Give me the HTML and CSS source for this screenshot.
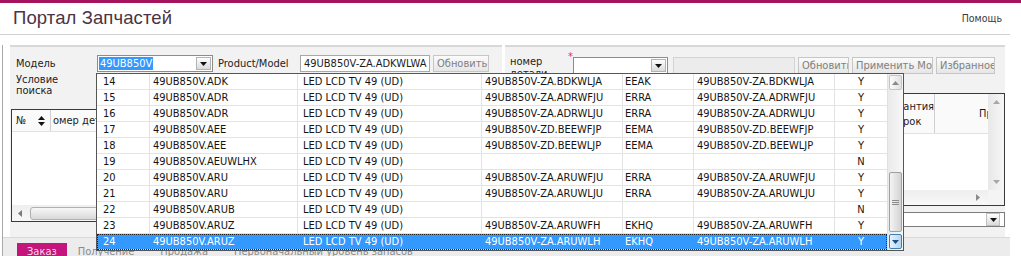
FILE: index.html
```
<!DOCTYPE html>
<html lang="ru">
<head>
<meta charset="utf-8">
<title>Портал Запчастей</title>
<link rel="stylesheet" href="styles.css">
</head>
<body>
<div class="topbar"></div>
<div class="page">
  <header class="header">
    <h1 class="title">Портал Запчастей</h1>
    <a class="help" href="#">Помощь</a>
  </header>

  <div class="main">
    <div class="work">
      <div class="col col-left">
        <div class="search search-left">
          <div class="row">
            <span class="lbl lbl-model">Модель</span>
            <div class="select sel-model">
              <span class="sel-val">49UB850V</span>
              <span class="dd-btn"><svg width="7" height="4" viewBox="0 0 7 4"><path d="M0 0H7L3.5 4Z" fill="#111"/></svg></span>
            </div>
            <span class="lbl lbl-pm">Product/Model</span>
            <div class="input pm-input">49UB850V-ZA.ADKWLWA</div>
            <button class="btn btn-upd">Обновить</button>
          </div>
          <div class="lbl row-cond">Условие<br>поиска</div>
        </div>

        <div class="grid grid-left">
          <div class="ghead">
            <div class="gh gh-no">№<svg class="sort" width="7" height="10" viewBox="0 0 7 10"><path d="M0 4L3.5 0L7 4Z M0 6H7L3.5 10Z" fill="#111"/></svg></div>
            <div class="gh gh-part">омер детали</div>
          </div>
          <div class="gbody"></div>
          <div class="hscroll">
            <span class="sb-btn"><svg width="4" height="7" viewBox="0 0 4 7"><path d="M4 0V7L0 3.5Z" fill="#7a7a7a"/></svg></span>
            <span class="hthumb"></span>
          </div>
        </div>
      </div>

      <div class="col col-right">
        <div class="search search-right">
          <span class="lbl lbl-part">номер<br>детали</span>
          <span class="req">*</span>
          <div class="select sel-part">
            <span class="dd-btn"><svg width="7" height="4" viewBox="0 0 7 4"><path d="M0 0H7L3.5 4Z" fill="#111"/></svg></span>
          </div>
          <div class="input input-dis"></div>
          <button class="btn b1">Обновить</button>
          <button class="btn b2">Применить Модель</button>
          <button class="btn b3">Избранное</button>
        </div>

        <div class="grid grid-right">
          <div class="ghead ghead-r">
            <div class="gh gh-fill"></div>
            <div class="gh gh-war">Гарантия<br>срок</div>
            <div class="gh gh-note">Примечание</div>
          </div>
          <div class="gbody gbody-r"></div>
          <div class="vscroll">
            <svg width="7" height="4" viewBox="0 0 7 4"><path d="M0 4L3.5 0L7 4Z" fill="#a8a8a8"/></svg>
            <svg width="7" height="4" viewBox="0 0 7 4"><path d="M0 0H7L3.5 4Z" fill="#a8a8a8"/></svg>
          </div>
          <div class="hscroll hscroll-r">
            <svg width="4" height="7" viewBox="0 0 4 7"><path d="M0 0V7L4 3.5Z" fill="#8a8a8a"/></svg>
          </div>
          <div class="corner"></div>
        </div>

        <div class="select sel-page">
          <span class="dd-btn"><svg width="7" height="4" viewBox="0 0 7 4"><path d="M0 0H7L3.5 4Z" fill="#111"/></svg></span>
        </div>
      </div>
    </div>

    <nav class="tabs">
      <span class="tab tab-active">Заказ</span>
      <span class="tab">Получение</span>
      <span class="tab">Продажа</span>
      <span class="tab">Первоначальный уровень запасов</span>
    </nav>
  </div>

  <div class="dropdown">
    <div class="dd-list">
      <div class="dd-row"><span class="c1">14</span><span class="c2">49UB850V.ADK</span><span class="c3">LED LCD TV 49 (UD)</span><span class="c4">49UB850V-ZA.BDKWLJA</span><span class="c5">EEAK</span><span class="c6">49UB850V-ZA.BDKWLJA</span><span class="c7">Y</span></div>
      <div class="dd-row"><span class="c1">15</span><span class="c2">49UB850V.ADR</span><span class="c3">LED LCD TV 49 (UD)</span><span class="c4">49UB850V-ZA.ADRWFJU</span><span class="c5">ERRA</span><span class="c6">49UB850V-ZA.ADRWFJU</span><span class="c7">Y</span></div>
      <div class="dd-row"><span class="c1">16</span><span class="c2">49UB850V.ADR</span><span class="c3">LED LCD TV 49 (UD)</span><span class="c4">49UB850V-ZA.ADRWLJU</span><span class="c5">ERRA</span><span class="c6">49UB850V-ZA.ADRWLJU</span><span class="c7">Y</span></div>
      <div class="dd-row"><span class="c1">17</span><span class="c2">49UB850V.AEE</span><span class="c3">LED LCD TV 49 (UD)</span><span class="c4">49UB850V-ZD.BEEWFJP</span><span class="c5">EEMA</span><span class="c6">49UB850V-ZD.BEEWFJP</span><span class="c7">Y</span></div>
      <div class="dd-row"><span class="c1">18</span><span class="c2">49UB850V.AEE</span><span class="c3">LED LCD TV 49 (UD)</span><span class="c4">49UB850V-ZD.BEEWLJP</span><span class="c5">EEMA</span><span class="c6">49UB850V-ZD.BEEWLJP</span><span class="c7">Y</span></div>
      <div class="dd-row"><span class="c1">19</span><span class="c2">49UB850V.AEUWLHX</span><span class="c3">LED LCD TV 49 (UD)</span><span class="c4"></span><span class="c5"></span><span class="c6"></span><span class="c7">N</span></div>
      <div class="dd-row"><span class="c1">20</span><span class="c2">49UB850V.ARU</span><span class="c3">LED LCD TV 49 (UD)</span><span class="c4">49UB850V-ZA.ARUWFJU</span><span class="c5">ERRA</span><span class="c6">49UB850V-ZA.ARUWFJU</span><span class="c7">Y</span></div>
      <div class="dd-row"><span class="c1">21</span><span class="c2">49UB850V.ARU</span><span class="c3">LED LCD TV 49 (UD)</span><span class="c4">49UB850V-ZA.ARUWLJU</span><span class="c5">ERRA</span><span class="c6">49UB850V-ZA.ARUWLJU</span><span class="c7">Y</span></div>
      <div class="dd-row"><span class="c1">22</span><span class="c2">49UB850V.ARUB</span><span class="c3">LED LCD TV 49 (UD)</span><span class="c4"></span><span class="c5"></span><span class="c6"></span><span class="c7">N</span></div>
      <div class="dd-row"><span class="c1">23</span><span class="c2">49UB850V.ARUZ</span><span class="c3">LED LCD TV 49 (UD)</span><span class="c4">49UB850V-ZA.ARUWFH</span><span class="c5">EKHQ</span><span class="c6">49UB850V-ZA.ARUWFH</span><span class="c7">Y</span></div>
      <div class="dd-row sel"><span class="c1">24</span><span class="c2">49UB850V.ARUZ</span><span class="c3">LED LCD TV 49 (UD)</span><span class="c4">49UB850V-ZA.ARUWLH</span><span class="c5">EKHQ</span><span class="c6">49UB850V-ZA.ARUWLH</span><span class="c7">Y</span></div>
    </div>
    <div class="dd-scroll">
      <span class="ds-btn ds-up"><svg width="7" height="4" viewBox="0 0 7 4"><path d="M0 4L3.5 0L7 4Z" fill="#8a8a8a"/></svg></span>
      <div class="ds-track">
        <span class="ds-thumb"><i></i><i></i><i></i></span>
      </div>
      <span class="ds-btn ds-down"><svg width="7" height="4" viewBox="0 0 7 4"><path d="M0 0H7L3.5 4Z" fill="#21507e"/></svg></span>
    </div>
  </div>
</div>
</body>
</html>
```
FILE: styles.css
```
* { box-sizing: border-box; }
html, body { overflow: hidden; }
body {
  margin: 0;
  background: #fff;
  font-family: "DejaVu Sans Condensed", "DejaVu Sans", sans-serif;
  font-stretch: condensed;
  font-size: 11px;
  color: #1c1c1c;
}
.topbar { height: 3px; background: #a5135d; }
.page { position: relative; width: 1010px; }

.header {
  height: 32px;
  border-bottom: 1px solid #d2d2d2;
  display: flex;
  justify-content: space-between;
  align-items: center;
  padding: 0 8px 0 13px;
}
.title {
  margin: 0;
  font: normal 18.5px/1 "Liberation Sans", Arial, sans-serif;
  color: #4b3443;
  letter-spacing: 0.1px;
}
.help {
  align-self: flex-start;
  margin-top: 9px;
  color: #3a3a3a;
  text-decoration: none;
  font-size: 10.5px;
}

.main { margin: 10px 0 0 2px; border-left: 1px solid #a8a8a8; }
.work { display: flex; gap: 3px; padding-left: 7px; }
.col { background: #f2f2f2; display: flex; flex-direction: column; height: 192px; }
.col-left { width: 492px; }
.col-right { width: 500px; }

.search { border-top: 2px solid #d8d8d8; }
.search-left { height: 64px; padding: 8px 0 0 6px; }
.row { display: flex; align-items: center; height: 17px; }
.lbl { color: #222; white-space: nowrap; }
.lbl-model { width: 81px; }
.lbl-pm { width: 82px; margin-left: 5px; }
.row-cond { margin-top: 2px; line-height: 11px; }

.select {
  display: flex;
  align-items: stretch;
  height: 17px;
  padding: 1px;
  background: #fff;
  border: 1px solid #8c8c8c;
}
.sel-model { width: 116px; }
.sel-val { background: #3399ff; color: #fff; padding: 0 1px; line-height: 13px; }
.dd-btn {
  width: 15px;
  margin-left: auto;
  border: 1px solid #b3b3b3;
  background: linear-gradient(#fefefe, #dadada);
  display: flex;
  align-items: center;
  justify-content: center;
}
.input {
  height: 17px;
  padding: 0 3px;
  line-height: 15px;
  background: #fff;
  border: 1px solid #a8a8a8;
  white-space: nowrap;
  overflow: hidden;
}
.pm-input { width: 130px; }
.btn {
  height: 17px;
  padding: 0 3px;
  font: inherit;
  line-height: 15px;
  color: #808080;
  background: linear-gradient(#fbfbfb, #e6e6e6);
  border: 1px solid #c6c6c6;
  white-space: nowrap;
  overflow: hidden;
  text-align: left;
}
.btn-upd { width: 56px; margin-left: 3px; text-align: center; }

.search-right {
  height: 48px;
  display: flex;
  align-items: flex-start;
  padding: 10px 0 0 5px;
}
.lbl-part { width: 58px; line-height: 12px; margin-top: -1px; }
.req { width: 5px; color: #d3366e; line-height: 12px; margin-top: -6px; }
.sel-part { width: 95px; }
.input-dis { width: 122px; margin-left: 5px; background: #ececec; border-color: #d3d3d3; }
.b1 { width: 51px; margin-left: 3px; }
.b2 { width: 81px; margin-left: 3px; }
.b3 { width: 59px; margin-left: 3px; }

.grid { background: #fff; border: 1px solid #3a3a3a; height: 113px; }
.grid-left { width: 489px; margin-left: 1px; display: flex; flex-direction: column; }
.ghead { height: 22px; display: flex; background: #fafafa; border-bottom: 1px solid #e2e2e2; overflow: hidden; }
.gh { display: flex; align-items: center; white-space: nowrap; overflow: hidden; flex: none; }
.gh-no { width: 39px; padding-left: 4px; border-right: 1px solid #cfcfcf; }
.sort { margin-left: auto; margin-right: 5px; }
.gh-part { padding-left: 2px; flex: 1; }
.gbody { flex: 1; }
.hscroll {
  height: 16px;
  display: flex;
  align-items: center;
  background: linear-gradient(#eeeeee, #f8f8f8);
}
.sb-btn { width: 16px; display: flex; justify-content: center; }
.hthumb {
  flex: 1;
  height: 13px;
  margin-left: 2px;
  border: 1px solid #b0b0b0;
  border-radius: 3px;
  background: linear-gradient(#f7f7f7, #d9d9d9);
}

.grid-right {
  display: grid;
  grid-template-columns: minmax(0, 1fr) 16px;
  grid-template-rows: 40px minmax(0, 1fr) 15px;
}
.ghead-r { height: 40px; grid-column: 1; grid-row: 1; }
.gh-fill { width: 379px; }
.gh-war { width: 50px; justify-content: center; text-align: center; line-height: 15px; border-right: 1px solid #cfcfcf; }
.gh-note { flex: 1; padding-left: 44px; }
.gbody-r { grid-column: 1; grid-row: 2; }
.vscroll {
  grid-column: 2;
  grid-row: 1 / 3;
  display: flex;
  flex-direction: column;
  justify-content: space-between;
  align-items: center;
  padding: 6px 0 6px;
  background: linear-gradient(90deg, #e8e8e8, #f6f6f6);
}
.hscroll-r { grid-column: 1; grid-row: 3; justify-content: flex-end; padding-right: 8px; height: 15px; }
.corner { grid-column: 2; grid-row: 3; background: #f4f4f4; }

.sel-page { width: 200px; height: 15px; margin: 6px 0 0 auto; padding: 0 4px 0 1px; border-color: #7c7c7c; }
.sel-page .dd-btn { width: 14px; border-color: #c0c0c0; }

.tabs {
  height: 21px;
  display: flex;
  align-items: flex-start;
  padding: 5px 0 0 14px;
  background: #ececec;
  border-top: 1px solid #d9d9d9;
}
.tab { height: 17px; line-height: 17px; padding: 0 13px; color: #8a8a8a; white-space: nowrap; }
.tab-active { padding: 0 10px; margin-right: -2px; background: #c3157b; color: #fbd6ea; }

.dropdown {
  position: absolute;
  left: 96px;
  top: 70px;
  width: 808px;
  height: 178px;
  display: flex;
  background: #fff;
  border: 1px solid #555;
}
.dd-list { width: 790px; }
.dd-row { display: flex; height: 16px; border-bottom: 1px solid #e3e3e3; color: #141414; }
.dd-row span {
  flex: none;
  padding-left: 4px;
  line-height: 15px;
  white-space: nowrap;
  overflow: hidden;
  border-right: 1px solid #e3e3e3;
}
.dd-row .c1 { width: 53px; padding-left: 6px; }
.dd-row .c2 { width: 148px; padding-left: 3px; }
.dd-row .c3 { width: 184px; padding-left: 5px; }
.dd-row .c4 { width: 141px; padding-left: 3px; }
.dd-row .c5 { width: 71px; padding-left: 2px; }
.dd-row .c6 { width: 141px; padding-left: 3px; }
.dd-row .c7 { width: 52px; padding-left: 0; text-align: center; border-right: 0; }
.dd-row.sel { background: #3399ff; color: #fff; outline: 1px dotted #1e1e1e; outline-offset: -1px; }
.dd-row.sel span { border-right-color: transparent; }

.dd-scroll {
  width: 16px;
  display: flex;
  flex-direction: column;
  background: linear-gradient(90deg, #eaeaea, #f7f7f7);
  border-left: 1px solid #e0e0e0;
}
.ds-btn {
  height: 15px;
  margin: 1px;
  display: flex;
  align-items: center;
  justify-content: center;
  border-radius: 2px;
}
.ds-up { border: 1px solid #c4c4c4; background: linear-gradient(90deg, #fafafa, #e2e2e2); }
.ds-down { border: 1px solid #3c7fb1; background: linear-gradient(90deg, #e6f3fd, #b4d5f1); }
.ds-track { flex: 1; display: flex; flex-direction: column; justify-content: flex-end; padding: 0 1px 1px; }
.ds-thumb {
  height: 60px;
  border: 1px solid #a0a0a0;
  border-radius: 2px;
  background: linear-gradient(90deg, #f4f4f4, #d3d3d3);
  display: flex;
  flex-direction: column;
  align-items: center;
  justify-content: center;
  gap: 1px;
}
.ds-thumb i { display: block; width: 7px; height: 1px; background: #8c8c8c; }
```
